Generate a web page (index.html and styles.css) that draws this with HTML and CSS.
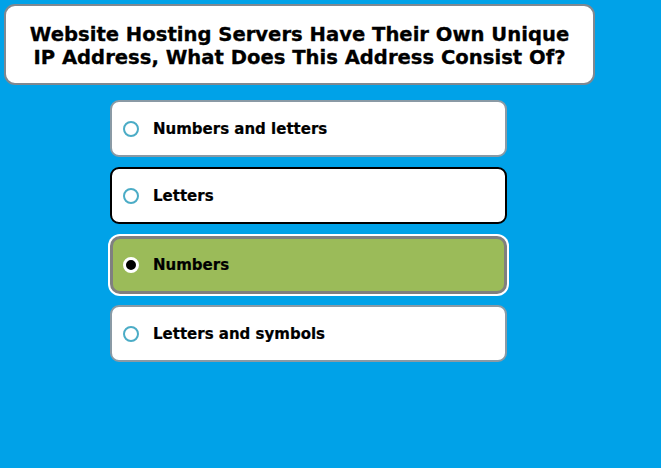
FILE: index.html
```html
<!DOCTYPE html>
<html>
<head>
<meta charset="utf-8">
<link rel="stylesheet" href="styles.css">
</head>
<body>
<div class="question">Website Hosting Servers Have Their Own Unique<br>IP Address, What Does This Address Consist Of?</div>
<div class="options">
  <div class="option"><span class="radio"></span><span class="label">Numbers and letters</span></div>
  <div class="option hover"><span class="radio"></span><span class="label">Letters</span></div>
  <div class="option selected"><span class="radio checked"></span><span class="label">Numbers</span></div>
  <div class="option"><span class="radio"></span><span class="label">Letters and symbols</span></div>
</div>
</body>
</html>
```
FILE: styles.css
```css
html, body {
  margin: 0;
  padding: 0;
  background: #00a2e8;
  height: 100%;
}
body {
  font-family: "DejaVu Sans", Verdana, sans-serif;
  font-weight: bold;
  color: #000;
  padding-top: 4px;
  box-sizing: border-box;
}
.question {
  margin-left: 4px;
  width: 591px;
  height: 81px;
  box-sizing: border-box;
  background: #fff;
  border: 2px solid #808890;
  border-radius: 11px;
  font-size: 19.6px;
  line-height: 23px;
  text-align: center;
  padding-top: 17px;
  -webkit-text-stroke: 0.3px #000;
}
.options {
  margin-left: 110px;
  margin-top: 15px;
  width: 397px;
  display: flex;
  flex-direction: column;
  gap: 10px;
}
.option {
  height: 57px;
  box-sizing: border-box;
  background: #fff;
  border: 2px solid #8a9aa5;
  border-radius: 9px;
  display: flex;
  align-items: center;
  padding-left: 11px;
  font-size: 15px;
  -webkit-text-stroke: 0.2px #000;
}
.option.hover {
  border-color: #000;
}
.option.selected {
  background: #9bbb59;
  border: 3px solid #808080;
  box-shadow: 0 0 0 2px #fff;
  height: 58px;
  margin-top: 2px;
  margin-bottom: 1px;
  padding-left: 10px;
  border-radius: 10px;
}
.radio {
  width: 12px;
  height: 12px;
  border: 2px solid #4bacc6;
  border-radius: 50%;
  background: #fff;
  flex: none;
}
.radio.checked {
  border: 3px solid #fff;
  width: 10px;
  height: 10px;
  background: #000;
}
.label {
  margin-left: 14px;
}
```
